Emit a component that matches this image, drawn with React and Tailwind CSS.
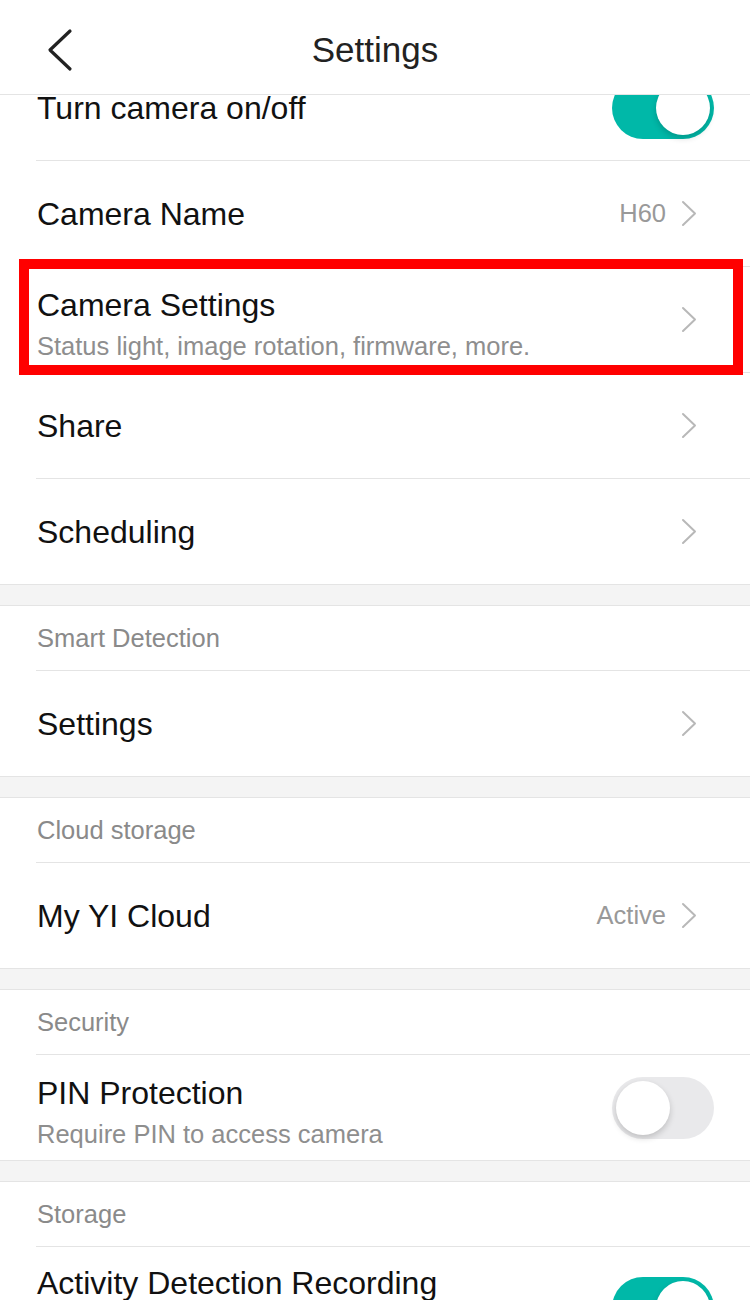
const sections = [
    {
        rows: [
            { title: 'Turn camera on/off', toggle: true },
            { title: 'Camera Name', value: 'H60', chevron: true },
            { title: 'Camera Settings', subtitle: 'Status light, image rotation, firmware, more.', chevron: true, highlight: true },
            { title: 'Share', chevron: true },
            { title: 'Scheduling', chevron: true },
        ],
    },
    { header: 'Smart Detection', rows: [{ title: 'Settings', chevron: true }] },
    { header: 'Cloud storage', rows: [{ title: 'My YI Cloud', value: 'Active', chevron: true }] },
    { header: 'Security', rows: [{ title: 'PIN Protection', subtitle: 'Require PIN to access camera', toggle: false }] },
    { header: 'Storage', rows: [{ title: 'Activity Detection Recording', toggle: true, tall: true }] },
];

function Chevron() {
    return (
        <svg width="16" height="27" viewBox="0 0 16 27" fill="none" className="shrink-0">
            <path d="M2 2L14 13.5L2 25" stroke="#b8b8b8" strokeWidth="2" strokeLinecap="round" strokeLinejoin="round" />
        </svg>
    );
}

function Toggle({ on }) {
    return (
        <div
            className={`flex h-[62px] w-[102px] shrink-0 items-center rounded-full p-[4px] ${
                on ? 'justify-end bg-[#00b8a8]' : 'justify-start bg-[#e9e9eb]'
            }`}
        >
            <div className="h-[54px] w-[54px] rounded-full bg-white shadow-[0_3px_6px_rgba(0,0,0,0.18)]" />
        </div>
    );
}

function Row({ row, last }) {
    return (
        <div className="relative pl-[36px]">
            {row.highlight && (
                <div className="pointer-events-none absolute left-[19px] right-[7px] top-[-8px] bottom-[-2px] border-[10px] border-[#ff0000]" />
            )}
            <div
                className={`box-content flex items-center ${row.tall ? 'h-[122px]' : 'h-[105px]'} ${
                    last ? '' : 'border-b border-[#e4e4e4]'
                } ${row.toggle !== undefined ? 'pr-[36px]' : 'pr-[53px]'}`}
            >
                <div className={`min-w-0 flex-1 pl-[1px] ${row.tall ? 'self-start pt-[16px]' : ''}`}>
                    <p className={`whitespace-nowrap text-[32px] text-[#111] ${row.subtitle ? 'leading-[52px]' : 'leading-[40px]'}`}>{row.title}</p>
                    {row.subtitle && (
                        <p className="whitespace-nowrap text-[25.5px] leading-[30px] text-[#8e8e8e]">{row.subtitle}</p>
                    )}
                </div>
                {row.value && <span className="mr-[15px] text-[25.5px] text-[#999]">{row.value}</span>}
                {row.chevron && <Chevron />}
                {row.toggle !== undefined && <Toggle on={row.toggle} />}
            </div>
        </div>
    );
}

export default function App() {
    return (
        <div className="flex h-[1300px] w-[750px] flex-col overflow-hidden bg-[#f4f4f4] font-['Liberation_Sans',Arial,sans-serif]">
            {/* Header */}
            <div className="relative z-10 flex h-[95px] shrink-0 items-center justify-center border-b border-[#e4e4e4] bg-white pt-[6px]">
                <svg width="30" height="46" viewBox="0 0 30 46" fill="none" className="absolute left-[45px] top-[27px]">
                    <path d="M25 4L5 23L25 42" stroke="#222" strokeWidth="3.2" strokeLinecap="round" strokeLinejoin="round" />
                </svg>
                <h1 className="text-[35px] text-[#222]">Settings</h1>
            </div>

            {/* Scrolled list */}
            <div className="flex-1 overflow-hidden">
                <div className="-mt-[40px] space-y-[20px]">
                    {sections.map((section, i) => (
                        <div key={i} className={`bg-white ${i === 0 ? 'border-b' : 'border-y'} border-[#e4e4e4]`}>
                            {section.header && (
                                <div className="pl-[36px]">
                                    <div className="box-content flex h-[64px] items-center border-b border-[#e4e4e4] pl-[1px] text-[25.5px] text-[#8a8a8a]">
                                        {section.header}
                                    </div>
                                </div>
                            )}
                            {section.rows.map((row, j) => (
                                <Row key={j} row={row} last={j === section.rows.length - 1} />
                            ))}
                        </div>
                    ))}
                </div>
            </div>
        </div>
    );
}
